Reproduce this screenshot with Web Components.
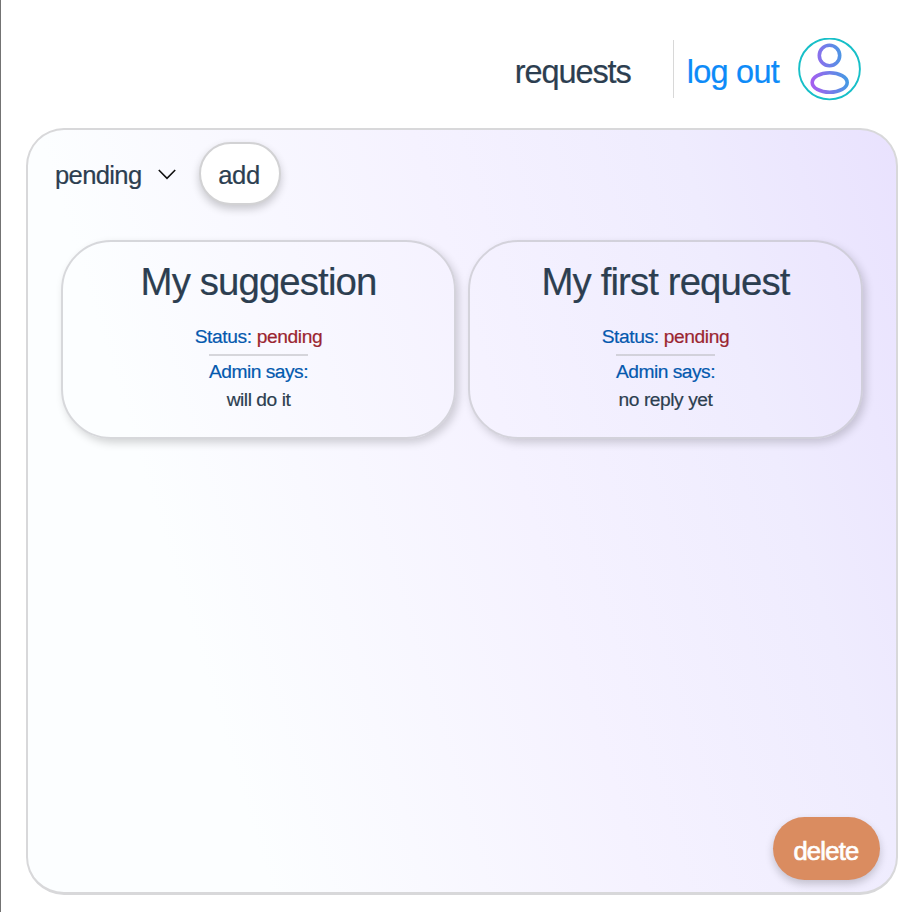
<!DOCTYPE html>
<html lang="en"><head><meta charset="utf-8"><title>Requests</title>
<style>body{margin:0;background:#fff;font-family:"Liberation Sans",Arial,sans-serif;color:#2c3e50;-webkit-text-stroke:.2px currentColor}</style></head>
<body><app-shell></app-shell>
<script>
function define(name, html){
  const t=document.createElement('template');t.innerHTML=html;
  customElements.define(name,class extends HTMLElement{
    constructor(){super();this.attachShadow({mode:'open'}).append(t.content.cloneNode(true));}
  });
}
define('user-avatar',`<style>:host{display:block;width:63px;height:63px}svg{display:block}</style>
<svg width="63" height="63" viewBox="0 0 63 63" fill="none">
<defs><linearGradient id="g" gradientUnits="userSpaceOnUse" x1="12" y1="40" x2="52" y2="34"><stop stop-color="#a85cf0"/><stop offset="1" stop-color="#3c9fe2"/></linearGradient></defs>
<circle cx="31.5" cy="31" r="30.4" stroke="#17bfc8" stroke-width="1.9"/>
<circle cx="31.5" cy="17.5" r="10.2" stroke="url(#g)" stroke-width="3.6"/>
<ellipse cx="31.7" cy="44.5" rx="17.5" ry="9.8" stroke="url(#g)" stroke-width="3.6"/></svg>`);
define('nav-bar',`<style>:host{display:flex;box-sizing:border-box;height:128px;padding:38px 57px 0 0;justify-content:flex-end;align-items:flex-start}
a{font-size:32.5px;line-height:38px;margin-top:15px;white-space:nowrap}
.r{letter-spacing:-1.1px;margin-right:42px}.o{color:#0d8bf8;-webkit-text-stroke-color:#0d8bf8;letter-spacing:-.75px;margin-right:19px}
i{width:1px;height:58px;background:#d8d8d8;margin:2px 13px 0 0}</style>
<a class="r">requests</a><i></i><a class="o">log out</a><user-avatar></user-avatar>`);
define('status-select',`<style>:host{display:flex;align-items:center;font-size:25.6px;line-height:30px;letter-spacing:-.65px;padding-top:3px}svg{margin:-2px 0 0 16px}</style>
<slot></slot><svg width="18" height="11" viewBox="0 0 18 11"><path d="M.8 1 9 9.4 17.2 1" fill="none" stroke="#111" stroke-width="1.6"/></svg>`);
define('pill-button',`<style>:host{display:flex;box-sizing:border-box;align-items:center;justify-content:center;width:82px;height:63px;border:2px solid #d2d2d4;border-radius:32px;background:#fff;box-shadow:0 4px 8px rgba(0,0,0,.2);font-size:25.6px;line-height:30px;letter-spacing:-.4px;padding:3px 1px 0 0}
:host([danger]){width:107px;border:0;background:#da8c60;color:#fff;letter-spacing:-.75px;padding-top:4px;-webkit-text-stroke:.7px #fff}</style><slot></slot>`);
define('request-card',`<style>:host{display:flex;flex-direction:column;align-items:center;box-sizing:border-box;width:395px;height:199px;border:2px solid rgba(190,190,195,.6);border-radius:50px;box-shadow:3px 4px 9px rgba(0,0,0,.17);padding:18px 0 0 0;font-size:19.2px;line-height:24px;letter-spacing:-.38px}
h2{margin:0;font-weight:400;font-size:38.4px;line-height:44px;letter-spacing:-.9px}
.s,.a{color:#0459ae;-webkit-text-stroke-color:#0459ae}.s{margin-top:21px}.s span{color:#9b2530;-webkit-text-stroke-color:#9b2530}hr{width:99px;height:2px;border:0;background:rgba(190,190,195,.6);margin:5px 0 4px}.a{letter-spacing:-.5px}.t{margin-top:4px;letter-spacing:-.45px}</style>
<h2><slot name="title"></slot></h2><div class="s">Status: <span><slot name="status"></slot></span></div><hr><div class="a">Admin says:</div><div class="t"><slot></slot></div>`);
define('request-panel',`<style>:host{display:flex;flex-direction:column;box-sizing:border-box;height:767px;margin:0 20px 0 25px;border:2px solid #d8d8da;border-bottom-width:3px;border-radius:38px;background:linear-gradient(73deg,#fcfeff 22%,#f5f2ff 56%,#efecfe 80%,#e9e2fe 100%);padding:12px 16px 12px 27px}
.tools{display:flex;align-items:center;height:63px}.tools pill-button{margin-left:23px}.cards{display:flex;gap:12px;margin:35px 0 0 6px}pill-button[danger]{margin:auto 0 0 auto}</style>
<div class="tools"><status-select>pending</status-select><pill-button>add</pill-button></div>
<div class="cards"><slot></slot></div><pill-button danger>delete</pill-button>`);
define('app-shell',`<style>:host{display:block;box-sizing:border-box;height:912px;border-left:1px solid #737373}</style>
<nav-bar></nav-bar><request-panel>
<request-card><span slot="title">My suggestion</span><span slot="status">pending</span>will do it</request-card>
<request-card><span slot="title">My first request</span><span slot="status">pending</span>no reply yet</request-card>
</request-panel>`);
</script></body></html>
